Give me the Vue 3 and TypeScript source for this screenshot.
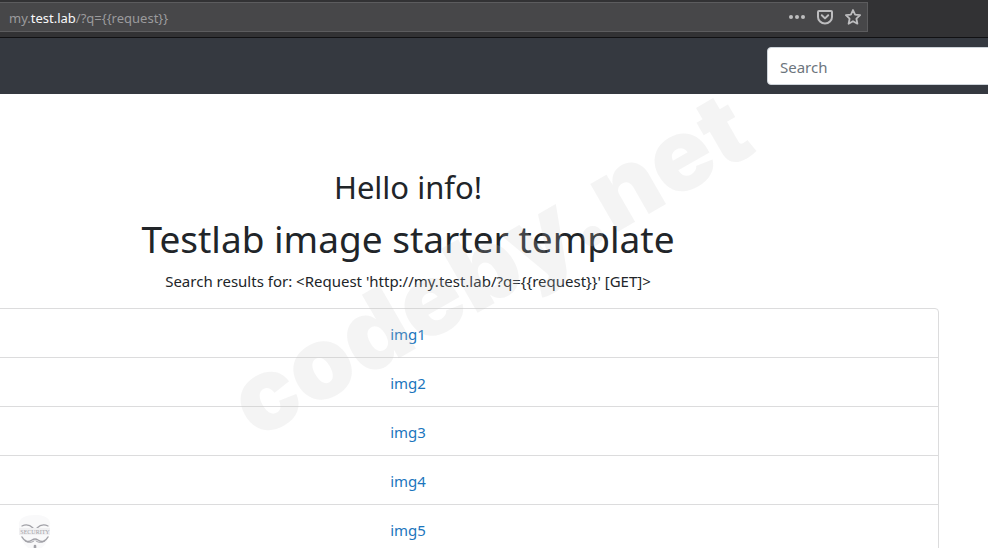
<script setup lang="ts">
import { ref } from 'vue'

const query = ref<string>('')
const requestPath = '/?q={{request}}'
const resultLabel = "<Request 'http://my.test.lab/?q={{request}}' [GET]>"
const images: string[] = ['img1', 'img2', 'img3', 'img4', 'img5']
</script>

<template>
  <div class="page">
    <div class="toolbar">
      <div class="address">
        <span class="url">my.<span class="domain">test.lab</span>{{ requestPath }}</span>
        <div class="actions">
          <button type="button" aria-label="Page actions">
            <svg viewBox="0 0 18 18"><g fill="currentColor"><circle cx="3" cy="9" r="2" /><circle cx="9" cy="9" r="2" /><circle cx="15" cy="9" r="2" /></g></svg>
          </button>
          <button type="button" aria-label="Save to Pocket">
            <svg viewBox="0 0 18 18" fill="none" stroke="currentColor" stroke-width="2" stroke-linecap="round" stroke-linejoin="round"><path d="M3 3h12q1 0 1 1v5a7 6.5 0 0 1-14 0V4q0-1 1-1z" /><path d="M5.8 7.3 9 10.4l3.2-3.1" /></svg>
          </button>
          <button type="button" aria-label="Bookmark this page">
            <svg viewBox="0 0 18 18" fill="none" stroke="currentColor" stroke-width="1.8" stroke-linejoin="round"><path d="m9 2 2.1 4.6 5 .6-3.7 3.5 1 5L9 13.2l-4.4 2.5 1-5L1.9 7.2l5-.6z" /></svg>
          </button>
        </div>
      </div>
    </div>

    <header class="navbar">
      <form class="search" @submit.prevent>
        <input v-model="query" type="search" placeholder="Search" aria-label="Search" />
      </form>
    </header>

    <main class="content">
      <h2>Hello info!</h2>
      <h1>Testlab image starter template</h1>
      <p>Search results for: {{ resultLabel }}</p>
      <ul class="results">
        <li v-for="image in images" :key="image"><a :href="`#${image}`">{{ image }}</a></li>
      </ul>
    </main>

    <div class="watermark" aria-hidden="true">codeby.net</div>

    <svg class="mask" viewBox="0 0 36 34" aria-hidden="true">
      <path d="M2 12C1 4 8 1 18 1s16 3 15 11c0 12-4 21-15 26C7 33 2 24 2 12z" fill="#f9f9fa" />
      <g fill="none" stroke="#a2a2a8" stroke-linecap="round">
        <path d="M5 12q6-3 11 2M31 12q-6-3-11 2" stroke-width="1.3" />
        <path d="M5 23q4 7 10 3 3-2 6 0 6 4 10-3" stroke-width="1.5" />
        <path d="M8 27q5 3 9 0M28 27q-5 3-9 0" stroke-width="1" />
        <path d="M18 32v2" stroke-width="2.6" />
      </g>
      <rect x="2" y="14" width="31" height="7" fill="#f0f0f2" />
      <text x="18" y="20" text-anchor="middle">SECURITY</text>
    </svg>
  </div>
</template>

<style>
body {
  margin: 0;
  background: #fff;
}
</style>

<style scoped>
.page {
  position: relative;
  height: 100vh;
  overflow: hidden;
  color: #212529;
  font-family: "Noto Sans", "Open Sans", sans-serif;
  font-size: 15px;
  line-height: 24px;
}
.toolbar {
  box-sizing: border-box;
  height: 38px;
  padding: 2px 120px 5px 0;
  border-bottom: 1px solid #111113;
  background: #323234;
}
.address {
  box-sizing: border-box;
  height: 30px;
  display: flex;
  align-items: center;
  justify-content: space-between;
  padding: 0 5px 0 9px;
  border: 1px solid #5c5c5e;
  border-left: 0;
  background: #474749;
}
.url {
  padding-top: 2px;
  color: #9b9b9d;
  font-size: 13px;
}
.domain {
  color: #f9f9fa;
}
.actions {
  display: flex;
  gap: 10px;
}
.actions button {
  width: 18px;
  height: 18px;
  padding: 0;
  border: 0;
  background: none;
  color: #bdbdbf;
}
.actions svg {
  display: block;
}
.navbar {
  display: flex;
  justify-content: flex-end;
  padding: 9px 0;
  background: #353940;
}
.search {
  width: 233px;
  margin-right: -12px;
}
.search input {
  box-sizing: border-box;
  display: block;
  width: 100%;
  height: 38px;
  padding: 7px 12px 5px;
  border: 1px solid #ced4da;
  border-radius: 4px;
  appearance: none;
  background: #fff;
  color: #495057;
  font: inherit;
}
.search input::placeholder {
  color: #6c757d;
  opacity: 1;
}
.content {
  margin: 0 49px 0 -123px;
  padding-top: 74px;
  text-align: center;
}
h1,
h2 {
  margin: 0 0 8px;
  font-weight: 400;
}
h2 {
  font-size: 31px;
  line-height: 38px;
}
h1 {
  margin-bottom: 6px;
  font-size: 37px;
  line-height: 50px;
}
p {
  margin: 0 0 16px;
  line-height: 22px;
}
.results {
  margin: 0;
  padding: 0;
  border: 1px solid #dcdcdd;
  border-radius: 4px;
  list-style: none;
}
.results li {
  padding: 13px 20px 11px;
  border-bottom: 1px solid #dcdcdd;
}
.results a {
  color: #1c76bd;
  text-decoration: none;
}
.watermark {
  position: absolute;
  top: 264px;
  left: 489px;
  color: rgba(200, 200, 200, 0.2);
  font-family: Inter, sans-serif;
  font-size: 101px;
  font-weight: 900;
  line-height: 1;
  white-space: nowrap;
  transform: translate(-50%, -50%) rotate(-30deg);
  pointer-events: none;
}
.mask {
  position: absolute;
  bottom: 0;
  left: 17px;
  width: 36px;
  height: 34px;
}
.mask text {
  fill: #a2a2a8;
  font-family: "Liberation Serif", serif;
  font-size: 6px;
}
</style>
